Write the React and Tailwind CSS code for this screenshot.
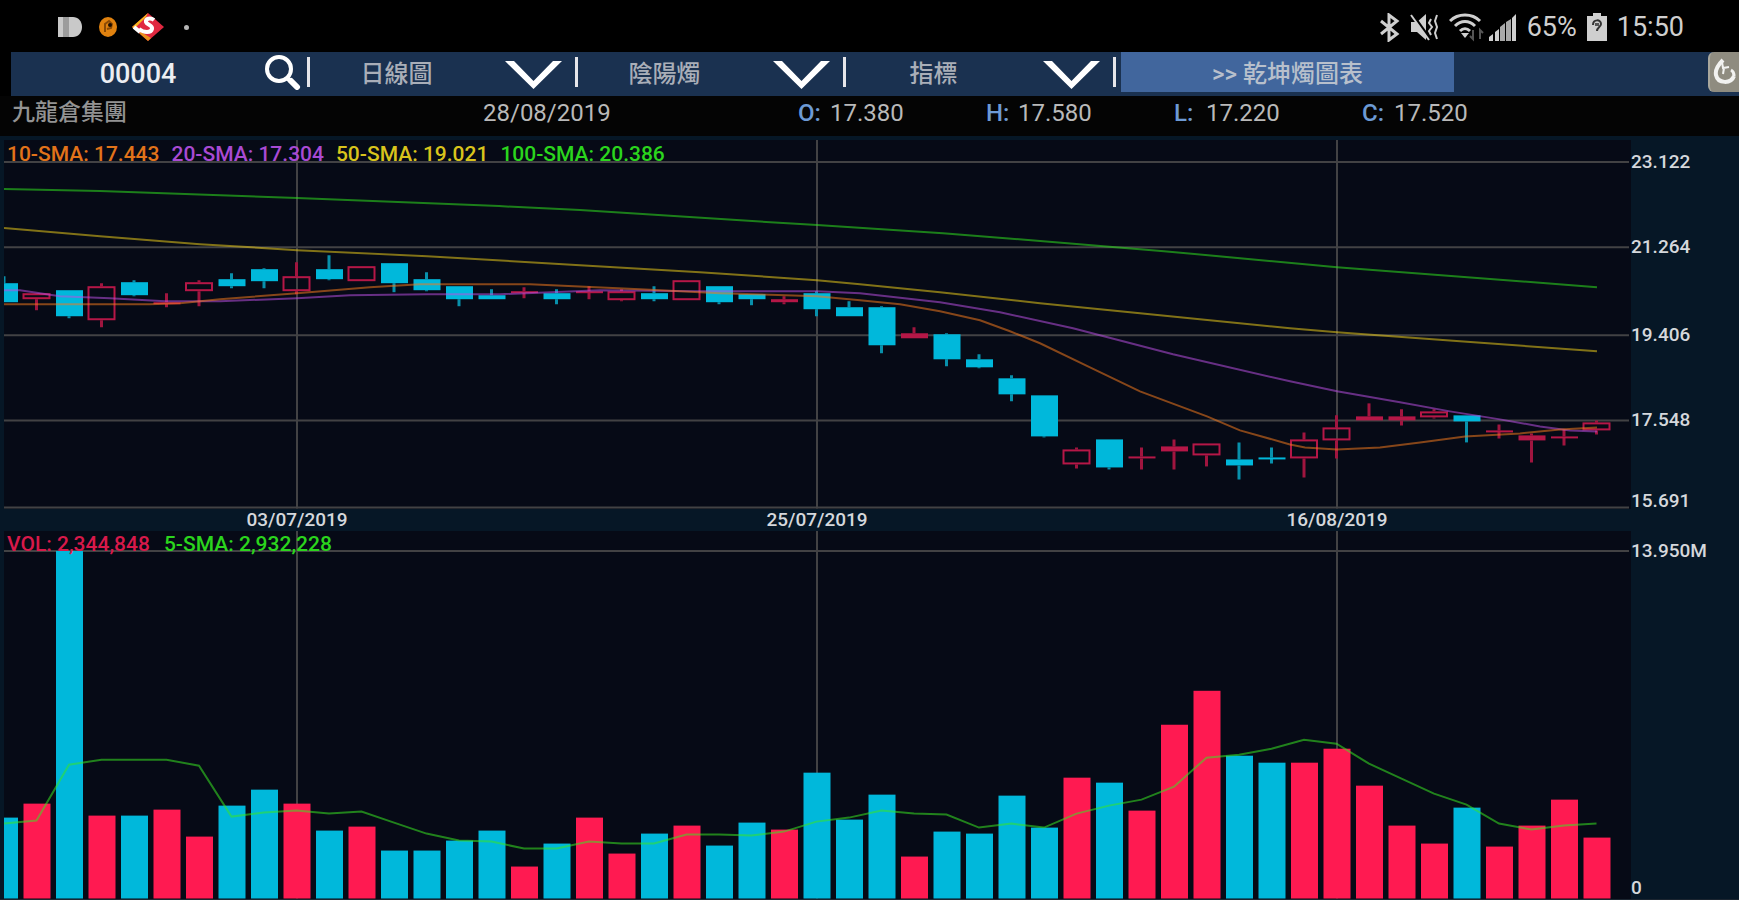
import React, { useState } from 'react';

const UP = '#ff1a51';
const DOWN = '#00b8db';

// [up, body top, body bottom, high, low, volume top]
const candles = [
  [0, 283, 302, 276, 302, 817],
  [1, 293, 299, 293, 310, 803],
  [0, 290, 316, 290, 318, 550],
  [1, 286, 320, 283, 327, 815],
  [0, 282, 295, 280, 296, 815],
  [1, 302, 303, 293, 307, 809],
  [1, 282, 291, 280, 306, 836],
  [0, 279, 286, 273, 288, 805],
  [0, 269, 281, 268, 288, 789],
  [1, 276, 291, 262, 294, 803],
  [0, 269, 279, 255, 280, 830],
  [1, 266, 281, 266, 281, 826],
  [0, 263, 283, 263, 292, 850],
  [0, 279, 290, 272, 291, 850],
  [0, 286, 299, 286, 306, 840],
  [0, 295, 299, 289, 299, 830],
  [1, 291, 292, 287, 298, 866],
  [0, 293, 299, 289, 304, 843],
  [1, 291, 292, 286, 299, 817],
  [1, 291, 300, 289, 301, 853],
  [0, 293, 299, 286, 301, 833],
  [1, 280, 300, 280, 300, 825],
  [0, 286, 302, 286, 304, 845],
  [0, 294, 299, 294, 305, 822],
  [1, 299, 302, 296, 304, 829],
  [0, 293, 309, 291, 316, 772],
  [0, 307, 316, 301, 316, 819],
  [0, 307, 345, 306, 353, 794],
  [1, 333, 338, 327, 338, 856],
  [0, 334, 359, 333, 366, 831],
  [0, 359, 367, 354, 368, 833],
  [0, 378, 394, 375, 401, 795],
  [0, 395, 436, 395, 437, 827],
  [1, 449, 464, 447, 468, 777],
  [0, 439, 467, 439, 469, 782],
  [1, 456, 458, 447, 469, 810],
  [1, 446, 451, 439, 469, 724],
  [1, 443, 455, 443, 466, 690],
  [0, 459, 465, 442, 479, 755],
  [0, 457, 458, 447, 463, 762],
  [1, 439, 458, 432, 477, 762],
  [1, 427, 440, 415, 458, 748],
  [1, 416, 420, 403, 420, 785],
  [1, 416, 420, 409, 425, 825],
  [1, 411, 417, 409, 418, 843],
  [0, 415, 421, 415, 442, 807],
  [1, 430, 431, 424, 438, 846],
  [1, 435, 440, 433, 462, 825],
  [1, 436, 437, 429, 445, 799],
  [1, 422, 430, 420, 434, 837],
];

const volumeSma = [
  823, 820, 764, 759, 759, 759, 765, 816, 812, 810, 813, 811, 822, 833, 840, 841, 848,
  848, 841, 843, 843, 834, 834, 835, 831, 821, 817, 810, 813, 814, 827, 823, 827, 813,
  805, 799, 786, 757, 754, 748, 739, 743, 763, 778, 793, 804, 823, 829, 825, 823,
];

const averages = [
  {
    color: '#2fe01f',
    points: '4,189 100,191 297,198 499,206 580,210 817,225 943,233 1164,251 1337,267 1597,287',
  },
  {
    color: '#e8c81a',
    points: '4,228 100,236 200,244 297,250 427,256 580,265 700,272 817,280 860,284 940,292 1040,303 1140,313 1290,328 1337,332 1460,341 1597,351',
  },
  {
    color: '#b84fe0',
    points: '4,290 20,290 60,296 110,298 165,301 220,301 297,298 350,295 427,294 500,294 600,290 700,291 817,291 860,293 940,302 1000,312 1073,328 1173,354 1290,381 1337,391 1400,402 1450,411 1500,419 1540,426 1570,430 1597,431',
  },
  {
    color: '#f0781e',
    points: '4,304 150,304 180,303 220,299 297,293 370,287 420,284 530,284 640,289 720,293 817,296 860,300 900,304 940,311 980,320 1010,331 1040,343 1090,367 1140,391 1207,416 1240,430 1290,444 1305,447 1337,449 1380,447 1420,442 1465,436 1520,433 1560,429 1597,427',
  },
];

const legend = [
  { text: '10-SMA: 17.443', color: 'text-[#e2731a]' },
  { text: '20-SMA: 17.304', color: 'text-[#a94ad4]' },
  { text: '50-SMA: 19.021', color: 'text-[#d9c41c]' },
  { text: '100-SMA: 20.386', color: 'text-[#2bd51d]' },
];

const quotes = [
  { label: 'O:', value: '17.380' },
  { label: 'H:', value: '17.580' },
  { label: 'L:', value: '17.220' },
  { label: 'C:', value: '17.520' },
];

const menus = [
  { name: 'period', options: ['日線圖', '週線圖', '月線圖'] },
  { name: 'style', options: ['陰陽燭', '線形圖'] },
  { name: 'indicator', options: ['指標', 'SMA', 'RSI'] },
];

const dayX = (i) => 4 + i * 32.5;
const verticals = [9, 25, 41].map((i) => dayX(i) + 0.5);

function StatusBar() {
  return (
    <div className="flex h-[52px] shrink-0 items-center justify-between bg-black pl-[58px] pr-[55px] pt-[2px] text-[27px] text-[#cfcfcf]">
      <div className="flex items-center">
        <svg className="h-5 w-6" viewBox="0 0 24 20" fill="#c9c9c9">
          <path d="M0 0h5v20H0z" />
          <path d="M5 0h6v20H5z" fill="#9c9c9c" />
          <path d="M11 0h4c5 0 9 4 9 10s-4 10-9 10h-4z" />
        </svg>
        <svg className="ml-4 h-[22px] w-5" viewBox="0 0 20 22">
          <ellipse cx="10" cy="11" rx="9" ry="10" fill="#e0820f" />
          <path d="M7 16V8l4-3 3 3-1 4-4 1" fill="none" stroke="#8a4a06" strokeWidth="2" />
          <circle cx="12" cy="9" r="2" fill="#1c0d00" />
        </svg>
        <svg className="ml-[14px] h-7 w-8" viewBox="0 0 32 28">
          <path d="M16 0L32 14 16 28 0 14z" fill="#e02840" />
          <path d="M16 0L0 14l7 6-3-6L14 4z" fill="#f5b51c" />
          <path d="M7 20l9 8 3-3-10-6z" fill="#e8921c" />
          <path d="M22 7c-4-3-9-1-8 2s7 3 6 7-8 4-13 0M2 14l6 5" fill="none" stroke="#fff" strokeWidth="4" />
        </svg>
        <span className="ml-5 size-[5px] rounded-full bg-[#b5b5b5]" />
      </div>
      <div className="flex items-center">
        <svg className="h-[29px] w-[21px]" viewBox="0 0 21 29" fill="none" stroke="#cfcfcf" strokeWidth="3">
          <path d="M2 8l16 13-8 6V2l8 6L2 21" />
        </svg>
        <svg className="ml-[10px] h-7 w-[29px]" viewBox="0 0 29 28">
          <path d="M1 9h6l9-8v26l-9-8H1z" fill="#cfcfcf" />
          <path d="M2 1l18 25" stroke="#000" strokeWidth="3" />
          <path d="M1 2l18 25" stroke="#cfcfcf" strokeWidth="2" />
          <path d="M21 6l-2 4 3 4-3 4 2 4M27 2l-2 6 2 6-2 6 2 6" fill="none" stroke="#cfcfcf" strokeWidth="2" />
        </svg>
        <svg className="ml-[10px] h-[29px] w-[36px]" viewBox="0 0 36 29">
          <g fill="none" stroke="#cfcfcf" strokeWidth="3">
            <path d="M1 8c8-8 22-8 30 0" />
            <path d="M6 13c6-6 14-6 20 0" />
            <path d="M11 18c3-3 7-3 10 0" />
          </g>
          <path d="M12 20h8l-4 5z" fill="#cfcfcf" />
          <path d="M24 17v9l-3-3M31 26v-9l3 3" fill="none" stroke="#555" strokeWidth="2" />
        </svg>
        <svg className="ml-1 h-[27px] w-7" viewBox="0 0 28 27" fill="#cfcfcf">
          <path d="M0 27v-4l4-3v7zM6 27V18l4-3v12z" />
          <path d="M11 27V13l5-4v18zM17 27V8l5-3v22z" fill="#a8a8a8" />
          <path d="M23 27V4l4-4v27z" />
        </svg>
        <span className="ml-[10px]">65%</span>
        <svg className="ml-[10px] h-7 w-5" viewBox="0 0 20 28">
          <path d="M6 0h8v3h6v25H0V3h6z" fill="#cfcfcf" />
          <path d="M6 12c0-6 8-6 8-1 0 3-4 3-4 7" fill="none" stroke="#333" strokeWidth="2" />
          <path d="M8 10h4v3H8z" fill="#555" />
        </svg>
        <span className="ml-[10px]">15:50</span>
      </div>
    </div>
  );
}

function Divider() {
  return <span className="h-[30px] w-[3px] shrink-0 bg-[#e6e6ea]" />;
}

function Menu({ name, options }) {
  const [value, setValue] = useState(options[0]);
  return (
    <div className="relative flex min-w-0 items-center">
      <select
        aria-label={name}
        value={value}
        onChange={(e) => setValue(e.target.value)}
        className="h-full min-w-0 flex-1 appearance-none bg-transparent pr-[92px] pt-1 text-center text-2xl font-medium text-[#a9aeb8] focus:outline-none"
      >
        {options.map((option) => (
          <option key={option}>{option}</option>
        ))}
      </select>
      <svg
        className="pointer-events-none absolute right-4 top-[9px] h-7 w-[57px]"
        viewBox="0 0 57 28"
        fill="#fff"
      >
        <path d="M0 0h9l19.500 20L48 0h9L28.500 28z" />
      </svg>
      <Divider />
    </div>
  );
}

function Toolbar() {
  const [code, setCode] = useState('00004');
  return (
    <div className="flex shrink-0 bg-black pl-[11px]">
      <div className="grid h-11 flex-1 grid-cols-[299fr_268fr_268fr_270fr_338fr_285fr] bg-[#1a3150] pb-1">
        <div className="flex min-w-0 items-center">
          <input
            aria-label="stock code"
            value={code}
            onChange={(e) => setCode(e.target.value)}
            className="h-full min-w-0 flex-1 bg-transparent pt-1 text-center text-[27px] font-medium text-[#eceef2] focus:outline-none"
          />
          <button aria-label="search" className="mr-[6px] h-[36px] w-9 shrink-0">
            <svg className="h-full w-full" viewBox="0 0 36 36" fill="none" stroke="#fff">
              <circle cx="14" cy="15" r="12" strokeWidth="4" />
              <path d="M22 24l3 3" strokeWidth="4" />
              <path d="M26 27l6 6" strokeWidth="6" strokeLinecap="round" />
            </svg>
          </button>
          <Divider />
        </div>
        {menus.map((menu) => (
          <Menu key={menu.name} {...menu} />
        ))}
        <button className="ml-[5px] bg-[#41669d] pt-1 text-2xl font-medium text-[#b8c0cc]">
          &gt;&gt; 乾坤燭圖表
        </button>
        <button
          aria-label="refresh"
          className="flex w-[31px] items-center justify-center justify-self-end rounded-l-md border-l-2 border-[#a9a79c] bg-[#8f8c80]"
        >
          <svg className="h-7 w-6" viewBox="0 0 24 28" fill="none" stroke="#f2f2f0">
            <path d="M10 2C5 7 2 12 3 17c2 9 15 9 18 1" strokeWidth="4" />
            <path d="M21 18c0-3-1-5-3-6" strokeWidth="3" />
            <path d="M9 4l1 6 6-1M11 10l-1 6" strokeWidth="2" />
          </svg>
        </button>
      </div>
    </div>
  );
}

function QuoteBar() {
  return (
    <div className="grid h-10 shrink-0 grid-cols-[471fr_315fr_188fr_188fr_188fr_377fr] items-center bg-[#040404] pb-[6px] pl-3 text-2xl text-[#b9b9b9]">
      <span className="text-[23px] font-medium text-[#939393]">九龍倉集團</span>
      <span>28/08/2019</span>
      {quotes.map((q) => (
        <span key={q.label} className="flex">
          <span className="w-8 font-medium text-[#6d9ad4]">{q.label}</span>
          {q.value}
        </span>
      ))}
    </div>
  );
}

function GridLines({ rows, top, bottom }) {
  return (
    <g stroke="#424244" strokeWidth="2">
      {rows.map((y) => (
        <path key={y} d={`M4 ${y}H1629`} />
      ))}
      {verticals.map((x) => (
        <path key={x} d={`M${x} ${top}V${bottom}`} />
      ))}
    </g>
  );
}

function Candle({ index, data }) {
  const [up, top, bottom, high, low] = data;
  const x = dayX(index);
  const hollow = up && bottom - top > 5;
  const height = Math.max(bottom - top, 2);
  const color = up ? '#b51747' : DOWN;
  return (
    <g>
      <path
        d={`M${x} ${high}V${top}M${x} ${bottom}V${low}`}
        stroke={up ? '#a0153f' : '#0890ab'}
        strokeWidth="3"
      />
      {hollow ? (
        <rect x={x - 13} y={top + 1} width="26" height={height - 2} fill="none" stroke={color} strokeWidth="2" />
      ) : (
        <rect x={x - 13} y={top} width="27" height={height} fill={color} />
      )}
    </g>
  );
}

function PriceChart() {
  return (
    <div className="relative flex min-h-0 flex-1">
      <svg
        className="h-full min-w-0 flex-1 bg-[#060a16]"
        viewBox="4 140 1627 368"
        preserveAspectRatio="none"
      >
        <GridLines rows={[162, 247, 335, 420, 507]} top={140} bottom={508} />
        {candles.map((data, i) => (
          <Candle key={i} index={i} data={data} />
        ))}
        {averages.map((line) => (
          <polyline
            key={line.color}
            points={line.points}
            fill="none"
            stroke={line.color}
            strokeWidth="2"
            strokeOpacity="0.55"
          />
        ))}
      </svg>
      <div className="absolute left-[3px] top-[2px] flex gap-[12px] text-[21px] font-medium leading-6">
        {legend.map((item) => (
          <span key={item.text} className={item.color}>{item.text}</span>
        ))}
      </div>
      <div className="flex w-[108px] shrink-0 flex-col pt-[14px] text-[19px] font-medium leading-4 text-[#d5d8dc]">
        <span className="flex-[85]">23.122</span>
        <span className="flex-[88]">21.264</span>
        <span className="flex-[85]">19.406</span>
        <span className="flex-[80]">17.548</span>
        <span>15.691</span>
      </div>
    </div>
  );
}

function DateAxis() {
  return (
    <div className="mr-[109px] grid h-[22px] shrink-0 grid-cols-[586fr_454fr_586fr] text-center text-[19px] font-medium leading-[22px] text-[#d5d8dc]">
      <span>03/07/2019</span>
      <span>25/07/2019</span>
      <span>16/08/2019</span>
    </div>
  );
}

function VolumeChart() {
  return (
    <div className="relative flex min-h-0 flex-1">
      <svg
        className="h-full min-w-0 flex-1 bg-[#060a16]"
        viewBox="4 530 1627 369"
        preserveAspectRatio="none"
      >
        <GridLines rows={[550]} top={530} bottom={898} />
        {candles.map(([up, , , , , top], i) => (
          <rect key={i} x={dayX(i) - 13} y={top} width="27" height={898 - top} fill={up ? UP : DOWN} />
        ))}
        <polyline
          points={volumeSma.map((y, i) => `${dayX(i)},${y}`).join(' ')}
          fill="none"
          stroke="#39e622"
          strokeWidth="2"
          strokeOpacity="0.55"
        />
      </svg>
      <div className="absolute left-[3px] top-[1px] flex gap-[14px] text-[21px] font-medium leading-6">
        <span className="text-[#d8194a]">VOL: 2,344,848</span>
        <span className="text-[#2bd51d]">5-SMA: 2,932,228</span>
      </div>
      <div className="flex w-[108px] shrink-0 flex-col justify-between pb-[3px] pt-3 text-[19px] font-medium leading-4 text-[#d5d8dc]">
        <span>13.950M</span>
        <span>0</span>
      </div>
    </div>
  );
}

export default function App() {
  return (
    <div className="flex h-screen min-h-[480px] flex-col overflow-hidden bg-[#061726] font-[Roboto,'Noto_Sans_CJK_TC',sans-serif]">
      <StatusBar />
      <Toolbar />
      <QuoteBar />
      <div className="flex min-h-0 flex-1 flex-col border-b border-[#1b2530] pl-1 pt-1">
        <PriceChart />
        <DateAxis />
        <VolumeChart />
      </div>
    </div>
  );
}
